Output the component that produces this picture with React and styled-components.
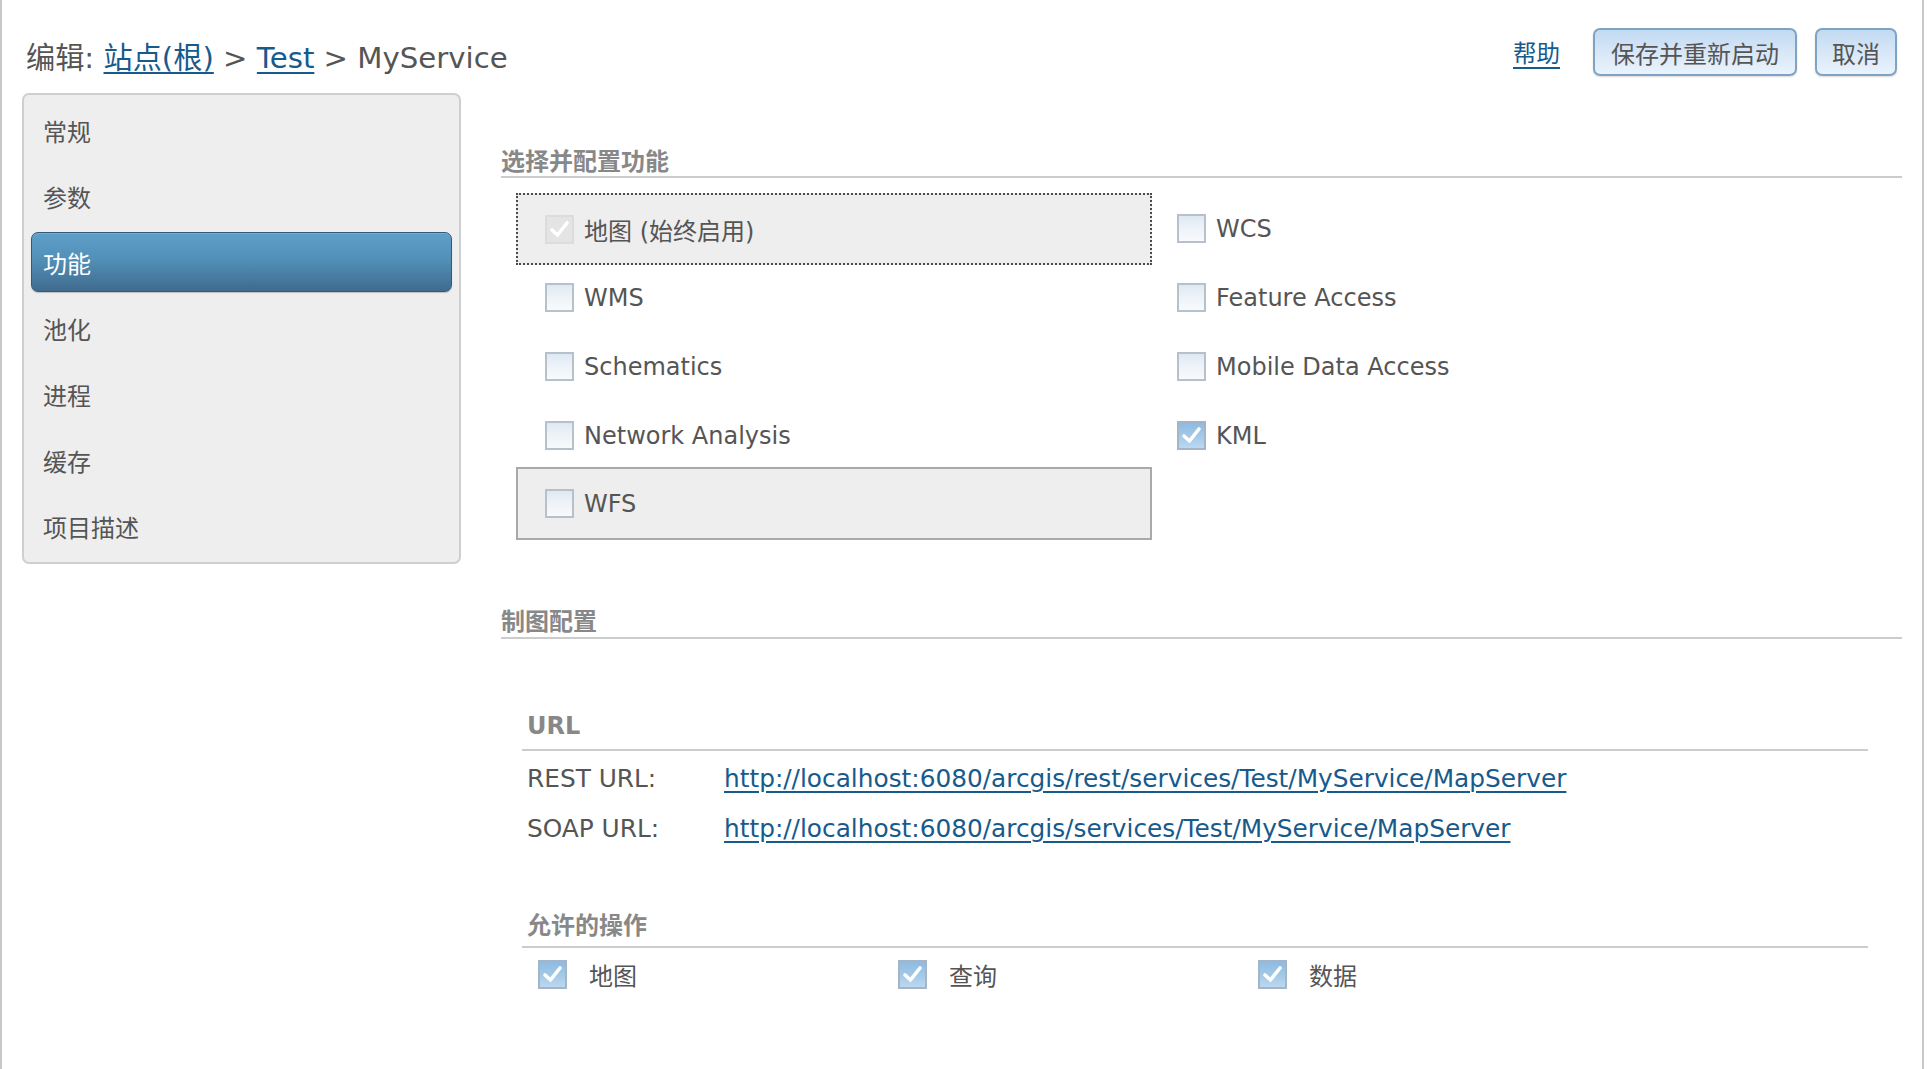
import React from "react";
import styled, { createGlobalStyle, css } from "styled-components";

const GlobalStyle = createGlobalStyle`
  html, body { margin: 0; padding: 0; background: #ffffff; }
  body { font-family: "DejaVu Sans", "Noto Sans CJK SC", sans-serif; color: #555555; }
  * { box-sizing: border-box; }
`;

const CJK = `"Noto Sans CJK SC", "DejaVu Sans", sans-serif`;
const LATIN = `"DejaVu Sans", "Noto Sans CJK SC", sans-serif`;

const Page = styled.div`
  width: 1924px;
  min-height: 1069px;
  border-left: 2px solid #c8c8c8;
  border-right: 2px solid #c8c8c8;
  background: #fff;
`;

const Header = styled.header`
  display: flex;
  align-items: flex-start;
  justify-content: space-between;
  padding: 28px 25px 0 24px;
  height: 76px;
`;

const Title = styled.h1`
  margin: 0;
  padding-top: 10px;
  font-family: ${LATIN};
  font-weight: normal;
  font-size: 29.2px;
  line-height: 40px;
  color: #555;
  white-space: nowrap;
`;

const CrumbLink = styled.a`
  color: #175a8c;
  text-decoration: underline;
  text-underline-offset: 4px;
  text-decoration-thickness: 2px;
`;

const Actions = styled.div`
  display: flex;
  align-items: center;
  gap: 18px;
`;

const HelpLink = styled.a`
  font-family: ${CJK};
  font-size: 23.5px;
  line-height: 48px;
  color: #175a8c;
  text-decoration: underline;
  text-underline-offset: 5px;
  text-decoration-thickness: 2px;
  margin-right: 15px;
`;

const Button = styled.button`
  height: 48px;
  padding: 0 ${(p) => p.$pad || 16}px;
  font-family: ${CJK};
  font-size: 24px;
  color: #555;
  border: 2px solid #7fa3c3;
  border-radius: 7px;
  background: linear-gradient(to bottom, #c2daf2 0%, #d7e7f7 50%, #eaf3fd 100%);
  box-shadow: 0 1px 2px rgba(0, 0, 0, 0.15);
  cursor: pointer;
`;

const Body = styled.div`
  display: flex;
  align-items: flex-start;
  padding: 17px 20px 0 20px;
  gap: 40px;
`;

const Sidebar = styled.nav`
  flex: 0 0 439px;
  display: flex;
  flex-direction: column;
  gap: 6px;
  padding: 5px 7px 6px;
  background: #eeeeee;
  border: 2px solid #cfcfcf;
  border-radius: 7px;
`;

const NavItem = styled.div`
  height: 60px;
  display: flex;
  align-items: center;
  padding-left: 12px;
  font-family: ${CJK};
  font-size: 24px;
  color: #555;
  border-radius: 7px;
  ${(p) =>
    p.$active &&
    css`
      color: #fff;
      background: linear-gradient(to bottom, #5e9fc8 0%, #5290b8 45%, #3f6b8e 100%);
      border: 1px solid #34597a;
      padding-left: 11px;
      box-shadow: inset 0 1px 0 rgba(255, 255, 255, 0.15), 0 1px 1px rgba(0, 0, 0, 0.2);
    `}
`;

const Main = styled.main`
  flex: 1;
  min-width: 0;
  padding-top: 52px;
`;

const SectionHeading = styled.h2`
  margin: ${(p) => p.$top || 0}px 0 0 0;
  padding: 0 0 ${(p) => p.$pb || 1}px ${(p) => p.$pl || 0}px;
  font-family: ${(p) => (p.$latin ? LATIN : CJK)};
  font-weight: bold;
  font-size: 24px;
  line-height: 30px;
  color: #888888;
  border-bottom: 2px solid #cccccc;
`;

const FeatureGrid = styled.div`
  display: grid;
  grid-template-columns: 636px 1fr;
  grid-auto-rows: 69px;
  margin: 16px 0 0 15px;
`;

const FeatureCell = styled.label`
  display: flex;
  align-items: center;
  gap: 10px;
  padding-left: 27px;
  font-family: ${LATIN};
  font-size: 24px;
  color: #555;
  border: 2px solid transparent;
  ${(p) =>
    p.$variant === "dotted" &&
    css`
      background: #eeeeee;
      border: 2px dotted #4a4a4a;
      margin: -1px 0 -2px;
    `}
  ${(p) =>
    p.$variant === "solid" &&
    css`
      background: #eeeeee;
      border: 2px solid #a9a9a9;
      margin: -3px 0 -1px;
    `}
  ${(p) => p.$right && css`padding-left: 23px;`}
`;

const Box = styled.span`
  flex: 0 0 29px;
  width: 29px;
  height: 29px;
  display: inline-flex;
  align-items: center;
  justify-content: center;
  border: 2px solid #b7c1cc;
  background: linear-gradient(to bottom, #dfe8f2 0%, #eef3f8 50%, #f8fafc 100%);
  ${(p) =>
    p.$checked &&
    css`
      border-color: #a6b5c6;
      background: linear-gradient(to bottom, #8dbbe1 0%, #a6cbea 60%, #bcd8f0 100%);
    `}
  ${(p) =>
    p.$disabled &&
    css`
      border-color: #dcdcdc;
      background: #e4e4e4;
    `}
`;

const Check = ({ checked, disabled }) => (
  <Box $checked={checked} $disabled={disabled}>
    {checked && (
      <svg width="21" height="19" viewBox="0 0 21 19">
        <path
          d="M3 10 L8.5 15 L18 3"
          fill="none"
          stroke="#ffffff"
          strokeWidth="3.6"
          strokeLinecap="round"
          strokeLinejoin="round"
        />
      </svg>
    )}
  </Box>
);

const SubSection = styled.div`
  margin: 0 34px 0 21px;
`;

const UrlTable = styled.div`
  display: grid;
  grid-template-columns: 202px 1fr;
  grid-auto-rows: 50px;
  margin-top: 2px;
  font-family: ${LATIN};
  font-size: 24.8px;
`;

const UrlLabel = styled.div`
  display: flex;
  align-items: center;
  padding-left: 5px;
  color: #555;
`;

const UrlLink = styled.a`
  display: flex;
  align-items: center;
  color: #175a8c;
  text-decoration: underline;
  text-underline-offset: 4px;
  text-decoration-thickness: 2px;
  white-space: nowrap;
`;

const OpsRow = styled.div`
  display: grid;
  grid-template-columns: repeat(3, 360px);
  height: 50px;
  margin-top: 1px;
  padding-left: 16px;
`;

const OpItem = styled.label`
  display: flex;
  align-items: center;
  gap: 22px;
  font-family: ${CJK};
  font-size: 24px;
  color: #555;
`;

const navItems = ["常规", "参数", "功能", "池化", "进程", "缓存", "项目描述"];

const features = [
  { left: { label: "地图 (始终启用)", checked: true, disabled: true, variant: "dotted" }, right: { label: "WCS" } },
  { left: { label: "WMS" }, right: { label: "Feature Access" } },
  { left: { label: "Schematics" }, right: { label: "Mobile Data Access" } },
  { left: { label: "Network Analysis" }, right: { label: "KML", checked: true } },
  { left: { label: "WFS", variant: "solid" }, right: null },
];

export default function App() {
  return (
    <>
      <GlobalStyle />
      <Page>
        <Header>
          <Title>
            编辑: <CrumbLink href="#">站点(根)</CrumbLink> &gt; <CrumbLink href="#">Test</CrumbLink> &gt; MyService
          </Title>
          <Actions>
            <HelpLink href="#">帮助</HelpLink>
            <Button $pad={16}>保存并重新启动</Button>
            <Button $pad={15}>取消</Button>
          </Actions>
        </Header>
        <Body>
          <Sidebar>
            {navItems.map((n) => (
              <NavItem key={n} $active={n === "功能"}>
                {n}
              </NavItem>
            ))}
          </Sidebar>
          <Main>
            <SectionHeading>选择并配置功能</SectionHeading>
            <FeatureGrid>
              {features.map((row, i) => (
                <React.Fragment key={i}>
                  <FeatureCell $variant={row.left.variant}>
                    <Check checked={row.left.checked} disabled={row.left.disabled} />
                    {row.left.label}
                  </FeatureCell>
                  {row.right ? (
                    <FeatureCell $right>
                      <Check checked={row.right.checked} />
                      {row.right.label}
                    </FeatureCell>
                  ) : (
                    <div />
                  )}
                </React.Fragment>
              ))}
            </FeatureGrid>

            <SectionHeading $top={66} $pb={2}>制图配置</SectionHeading>

            <SubSection>
              <SectionHeading $top={72} $pb={8} $pl={5} $latin>URL</SectionHeading>
              <UrlTable>
                <UrlLabel>REST URL:</UrlLabel>
                <UrlLink href="#">http://localhost:6080/arcgis/rest/services/Test/MyService/MapServer</UrlLink>
                <UrlLabel>SOAP URL:</UrlLabel>
                <UrlLink href="#">http://localhost:6080/arcgis/services/Test/MyService/MapServer</UrlLink>
              </UrlTable>

              <SectionHeading $top={56} $pb={7} $pl={5}>允许的操作</SectionHeading>
              <OpsRow>
                <OpItem>
                  <Check checked />
                  地图
                </OpItem>
                <OpItem>
                  <Check checked />
                  查询
                </OpItem>
                <OpItem>
                  <Check checked />
                  数据
                </OpItem>
              </OpsRow>
            </SubSection>
          </Main>
        </Body>
      </Page>
    </>
  );
}
